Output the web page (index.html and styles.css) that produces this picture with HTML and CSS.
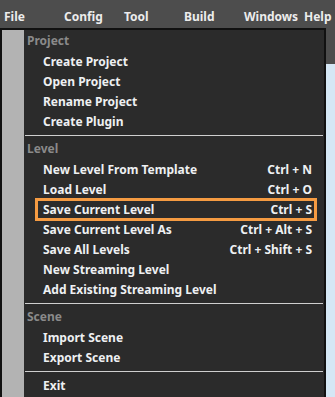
FILE: index.html
```html
<!DOCTYPE html>
<html>
<head>
<meta charset="utf-8">
<link rel="stylesheet" href="styles.css">
</head>
<body>
<div class="app">
  <div class="menubar">
    <span class="mb-item">File</span>
    <span class="mb-item">Config</span>
    <span class="mb-item">Tool</span>
    <span class="mb-item">Build</span>
    <span class="mb-item">Windows</span>
    <span class="mb-item">Help</span>
  </div>
  <div class="toolbar"></div>
  <div class="workspace"></div>

  <div class="menu">
    <div class="gutter"></div>
    <div class="menu-body">
      <div class="section">Project</div>
      <div class="item"><span>Create Project</span></div>
      <div class="item"><span>Open Project</span></div>
      <div class="item"><span>Rename Project</span></div>
      <div class="item"><span>Create Plugin</span></div>
      <div class="sep"></div>
      <div class="section">Level</div>
      <div class="item"><span>New Level From Template</span><span class="sc">Ctrl + N</span></div>
      <div class="item"><span>Load Level</span><span class="sc">Ctrl + O</span></div>
      <div class="item marked"><span>Save Current Level</span><span class="sc">Ctrl + S</span><div class="mark"></div></div>
      <div class="item"><span>Save Current Level As</span><span class="sc">Ctrl + Alt + S</span></div>
      <div class="item"><span>Save All Levels</span><span class="sc">Ctrl + Shift + S</span></div>
      <div class="item"><span>New Streaming Level</span></div>
      <div class="item"><span>Add Existing Streaming Level</span></div>
      <div class="sep"></div>
      <div class="section">Scene</div>
      <div class="item"><span>Import Scene</span></div>
      <div class="item"><span>Export Scene</span></div>
      <div class="sep"></div>
      <div class="item"><span>Exit</span></div>
    </div>
  </div>
</div>
</body>
</html>
```

FILE: styles.css
```css
* { box-sizing: border-box; }
html, body {
  margin: 0;
  padding: 0;
  width: 335px;
  height: 397px;
  overflow: hidden;
  background: #d5e7f5;
  font-family: "Noto Sans", "DejaVu Sans", sans-serif;
  font-weight: 700;
}
.app {
  position: relative;
  width: 335px;
  height: 397px;
}
.menubar {
  height: 28px;
  background: #4d4d4d;
  display: flex;
  align-items: center;
  padding-left: 4px;
  padding-top: 4px;
}
.mb-item {
  width: 60px;
  font-size: 12px;
  color: #ececec;
  flex: none;
}
.mb-item:last-child { width: auto; }
.toolbar {
  height: 36px;
  background: #4d4d4d;
}
.workspace {
  height: 333px;
  background: #d5e7f5;
}
.menu {
  position: absolute;
  left: 0;
  top: 28px;
  width: 326px;
  height: 371px;
  border: 2px solid #111111;
  border-bottom: none;
  background: #2b2b2b;
  display: flex;
}
.gutter {
  width: 22px;
  flex: none;
  background: #b3b3b3;
}
.menu-body {
  flex: 1;
  padding-top: 1px;
}
.section {
  height: 20px;
  line-height: 20px;
  padding-left: 3px;
  font-size: 12px;
  color: #8a8a8a;
}
.item {
  position: relative;
  height: 20px;
  display: flex;
  align-items: center;
  justify-content: space-between;
  padding-left: 19px;
  padding-right: 12px;
  font-size: 12px;
  color: #eef0f2;
  white-space: nowrap;
}
.sep {
  height: 8px;
  display: flex;
  align-items: center;
  padding-left: 1px;
  padding-right: 1px;
}
.sep::before {
  content: "";
  display: block;
  height: 1px;
  width: 100%;
  background: #cfcfcf;
}
.mark {
  position: absolute;
  left: 11px;
  top: -1px;
  width: 282px;
  height: 23px;
  border: 3px solid #f59b42;
}
```
